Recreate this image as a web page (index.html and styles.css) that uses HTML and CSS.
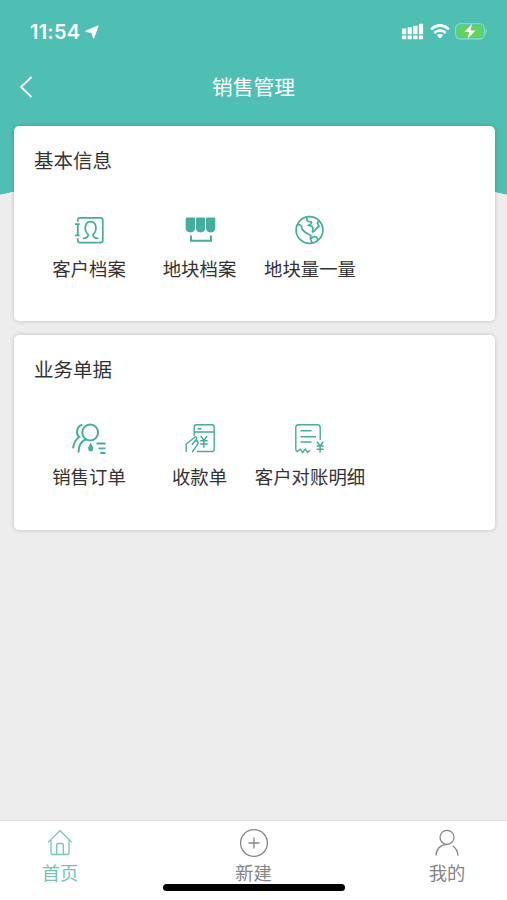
FILE: index.html
```
<!DOCTYPE html>
<html lang="zh-CN">
<head>
<meta charset="utf-8">
<meta name="viewport" content="width=device-width, initial-scale=1">
<title>销售管理</title>
<link rel="stylesheet" href="styles.css">
</head>
<body>
<div class="app">
  <header class="header">
    <div class="status">
      <span class="time">11:54</span>
      <svg class="locate" width="14" height="14" viewBox="0 0 14 14"><path d="M13 1 8.6 13 6.9 7.3 1 6.4z" fill="currentColor" stroke="currentColor" stroke-width="1.2" stroke-linejoin="round"/></svg>
      <svg class="signal" width="22" height="17" viewBox="0 0 22 17" fill="none" stroke="currentColor" stroke-width="4.2"><path d="M2.2 5.6v5.7M7.8 4.2v7.1M13.4 2.7v8.6M19 .7v10.6M2.2 12.5v3.8M7.8 12.5v3.8M13.4 12.5v3.8M19 12.5v3.8"/></svg>
      <svg class="wifi" width="20" height="15" viewBox="0 0 20 15" fill="none" stroke="currentColor" stroke-width="2.7"><path d="M1 5.3Q10-2.7 19 5.3M4.3 9Q10 3.8 15.7 9"/><path d="M6.8 11.2Q10 8.7 13.2 11.2L10 14.5z" fill="currentColor" stroke="none"/></svg>
      <svg class="battery" width="33" height="17" viewBox="0 0 33 17"><rect x=".7" y=".7" width="28.6" height="15.2" rx="4.6" fill="none" stroke="#9bdcd0" stroke-width="1.1"/><rect x="2.4" y="2.4" width="25.2" height="11.8" rx="3" fill="#61d45f"/><path d="M30.5 5.5q2.5 2.8 0 5.6z" fill="#9bdcd0"/><path d="M17 1 9.4 9h4.8L12.6 15.7 20.6 7.4h-5z" fill="#fff"/></svg>
    </div>
    <div class="navbar">
      <svg class="back" width="14" height="22" viewBox="0 0 14 22" fill="none" stroke="currentColor" stroke-width="1.8"><path d="M12.5 1 2 11l10.5 10"/></svg>
      <h1>销售管理</h1>
    </div>
  </header>
  <main class="content">
    <section class="card">
      <h2>基本信息</h2>
      <div class="grid">
        <a class="item">
          <svg class="icon" viewBox="9 7 40 36"><rect x="17.8" y="12.8" width="25" height="24.8" rx="2.2"/><path stroke="#fff" stroke-width="3" d="M17.8 16.8v2.4M17.8 30.8v2.4"/><path d="M15 19.2h4.6M15 30.4h4.6M22.8 33.5q5.8-.5 5.4-3.8c-4.8-4.5-3.5-13 2.4-13s7.2 8.5 2.4 13q-.4 3.3 5.4 3.8"/></svg>
          <span>客户档案</span>
        </a>
        <a class="item">
          <svg class="icon" viewBox="9 7 40 36"><path class="solid" d="M14.7 13.8q0-1.2 1.2-1.2h7q1.2 0 1.2 1.2V23q0 4-4.7 4.5-4.7-.5-4.7-4.5zM25 13.8q0-1.2 1.2-1.2h6.8q1.2 0 1.2 1.2V23q0 4-4.6 4.5Q25 27 25 23zM35 13.8q0-1.2 1.2-1.2h6.9q1.2 0 1.2 1.2V23q0 4-4.6 4.5Q35 27 35 23z"/><path stroke-width="2" d="M20 30.5v5.3h20v-5.3"/></svg>
          <span>地块档案</span>
        </a>
        <a class="item">
          <svg class="icon" viewBox="10 7 40 36"><circle cx="29.5" cy="25" r="13.4"/><path d="M17.3 19.3c3.4.2 4.8 1.8 4.7 4.7 2 3.6 5.5 4.2 8.8 6.4l-.4 3.4 1.8 4.2M31 33.5q2.8-2.8 5.6-1.2l1.6 3M27 12.4c-.8 3.4.8 4.2 4.2 4.4 1.2 1.4-.4 2.8-2.6 3.4 1.8 1 3.8.8 4.2 2.2.4 2-.6 3.4-.2 4.6 3.2-1 3.2-4.4 6.4-5.6l-1.6-3.6 1.2-1.6"/></svg>
          <span>地块量一量</span>
        </a>
      </div>
    </section>
    <section class="card">
      <h2>业务单据</h2>
      <div class="grid">
        <a class="item">
          <svg class="icon" viewBox="9 8 40 36"><circle cx="30.2" cy="20.5" r="7.9" stroke-width="2"/><path stroke-width="2" d="M22.5 12.8c-5.2 1-7.4 8-3.4 12.2-3.5 2.4-5.5 6.2-6 11.4M26 27.2c-4.5 1.7-7.5 6.5-7.5 13.2"/><path class="solid" d="M30.7 30.5l2.3 4.7q1 3.6-2.3 4.4-3.3-.8-2.3-4.4z"/><path stroke-width="1.8" d="M36.5 31.5h9M38.5 36.3h7M40.3 41h5.2"/></svg>
          <span>销售订单</span>
        </a>
        <a class="item">
          <svg class="icon" viewBox="9 8 40 36"><path stroke-width="1.4" d="M23.2 24V15q0-2.2 2.2-2.2h15.8q2 0 2 2.2v22.5q0 2-2 2H26M23.2 20h20M26.5 16.7h4"/><path stroke-width="1.4" d="M15.2 40v-8l9.3-7.2q2 .5.8 2.7l-4.5 5.2M23.5 29.5l2.5-.7q2 1.5.4 3.8-2.8 4.2-5.2 7.4"/><path stroke-width="1.5" d="m29.7 24 3.2 4.4 3.2-4.4M29.2 28.8h7.5M29.2 32h7.5M32.9 28.4v7.4"/></svg>
          <span>收款单</span>
        </a>
        <a class="item">
          <svg class="icon" viewBox="10 8 40 36"><path stroke-width="1.4" d="M40.2 28V15.5q0-2.7-2.7-2.7h-19q-2.7 0-2.7 2.7V37q0 2 1.4 2.6l3-2.4 2.4 3.3 2.6-3.3 2.5 3.3 2.3-2.5M20.5 18.7h11M20.5 24.7h15.5M20.5 30h11"/><path stroke-width="1.5" d="m37 29.7 3.1 4.2 3.1-4.2M36.6 34.1h7M36.6 37.2h7M40.1 33.8v6.7"/></svg>
          <span>客户对账明细</span>
        </a>
      </div>
    </section>
  </main>
  <nav class="tabbar">
    <a class="tab active">
      <svg width="28" height="30" viewBox="0 0 28 30"><path d="M2 13.4 14 1.6l12 11.8M5 11v13q0 1.5 1.5 1.5h15q1.5 0 1.5-1.5V11M10.7 25V16q0-1.5 1.5-1.5h3.6q1.5 0 1.5 1.5v9"/></svg>
      <span>首页</span>
    </a>
    <a class="tab create">
      <svg width="30" height="30" viewBox="0 0 30 30"><circle cx="15" cy="14" r="13.4"/><path d="M15 8.5v11M9.5 14h11"/></svg>
      <span>新建</span>
    </a>
    <a class="tab mine">
      <svg width="28" height="30" viewBox="0 0 28 30"><circle cx="14" cy="8.3" r="7"/><path d="M3 26.6C3.2 20 7.5 15.5 14 15.3M19.7 16.8q4.6 3.2 5.3 9.8"/></svg>
      <span>我的</span>
    </a>
    <div class="home-indicator"></div>
  </nav>
</div>
</body>
</html>
```

FILE: styles.css
```
* { box-sizing: border-box; }

body {
  margin: 0;
  font-family: "Noto Sans CJK SC", sans-serif;
  color: #333;
}

h1, h2 { margin: 0; font-weight: 400; }

svg { display: block; flex: none; }

.app {
  display: flex;
  flex-direction: column;
  height: 900px;
  overflow: hidden;
  background: radial-gradient(ellipse 275px 32px at 50% 207px, #ededee 99%, transparent 100%) no-repeat, linear-gradient(#4fbeb3 194px, #ededee 195px);
}

.header { height: 126px; color: #fff; }

.status {
  display: flex;
  align-items: center;
  height: 62px;
  padding: 1px 18px 0 30px;
}

.time {
  font: 600 20px/24px Inter, sans-serif;
  width: 50px;
  letter-spacing: 0.2px;
}

.locate { margin-left: 5px; }
.signal { margin-left: auto; }
.wifi { margin-left: 6px; }
.battery { margin: 0 1px 0 5px; }

.navbar {
  display: grid;
  grid-template-columns: 60px 1fr 60px;
  align-items: center;
  height: 50px;
}

.back { margin-left: 19px; }

h1 {
  font-size: 20.7px;
  line-height: 28px;
  padding-bottom: 2px;
  text-align: center;
}

.content {
  flex: 1;
  display: flex;
  flex-direction: column;
  gap: 14px;
  padding: 0 12px 0 14px;
}

.card {
  height: 195px;
  padding: 20px;
  background: #fff;
  border-radius: 5px;
  box-shadow: 0 0 4px rgba(0, 0, 0, 0.2);
}

h2 { font-size: 19.5px; line-height: 28px; }

.grid {
  display: grid;
  grid-template-columns: repeat(3, 110.5px);
  margin: 38px 0 0 -0.25px;
}

.card + .card .grid { margin-top: 37px; }

.item {
  display: flex;
  flex-direction: column;
  align-items: center;
  font-size: 18.4px;
  line-height: 28px;
  white-space: nowrap;
}

.icon {
  width: 40px;
  height: 36px;
  margin-bottom: 6px;
  fill: none;
  stroke: #45ad9c;
  stroke-width: 1.7;
}

.icon .solid { fill: #45ada0; stroke: none; }

.tabbar {
  position: relative;
  display: flex;
  justify-content: space-between;
  height: 80px;
  padding: 8px 30px 0;
  background: #fff;
  border-top: 1px solid #dedede;
  color: #858585;
}

.tab {
  display: flex;
  flex-direction: column;
  align-items: center;
  width: 60px;
  font-size: 18.3px;
  line-height: 28px;
}

.tab svg { fill: none; stroke: currentColor; stroke-width: 1.3; margin-bottom: -1px; }
.active { color: #75c3b4; }

.home-indicator {
  position: absolute;
  left: 163px;
  bottom: 9px;
  width: 182px;
  height: 7px;
  border-radius: 4px;
  background: #000;
}
```
